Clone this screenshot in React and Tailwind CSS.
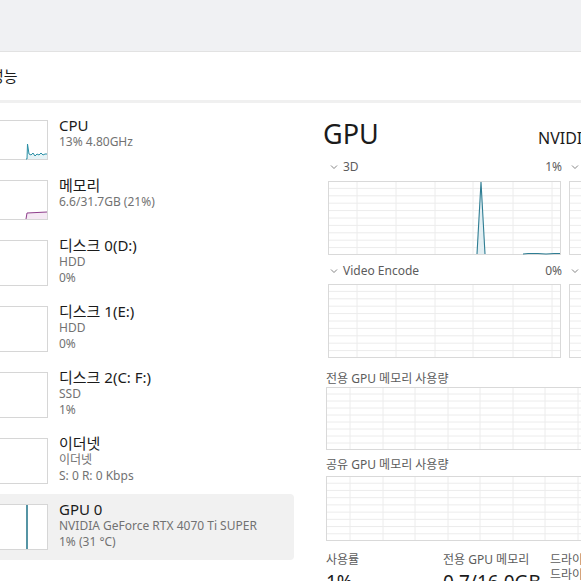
import React from 'react';

const FONT = '"Noto Sans", "Noto Sans CJK KR", sans-serif';

const ROWS = [
  { title: 'CPU', lines: ['13% 4.80GHz'], thumb: 'cpu' },
  { title: '메모리', lines: ['6.6/31.7GB (21%)'], thumb: 'mem' },
  { title: '디스크 0(D:)', lines: ['HDD', '0%'] },
  { title: '디스크 1(E:)', lines: ['HDD', '0%'] },
  { title: '디스크 2(C: F:)', lines: ['SSD', '1%'] },
  { title: '이더넷', lines: ['이더넷', 'S: 0 R: 0 Kbps'] },
  { title: 'GPU 0', lines: ['NVIDIA GeForce RTX 4070 Ti SUPER', '1% (31 °C)'], thumb: 'gpu', active: true },
];

function Thumb({ kind, h }) {
  return (
    <svg width="48" height={h} className="shrink-0 block">
      <rect x="-2" y="0.5" width="49.5" height={h - 1} fill="white" stroke="#d6d6d6" />
      {kind === 'cpu' && (
        <>
          <path d="M26 39 L27 39 L27.5 24 L29 34 L31 35 L33 33 L35 36 L37 34 L39 35 L41 33 L43 35 L45 34 L47 34 L47 39 Z" fill="#e6f3f6" />
          <path d="M26 39 L27 39 L27.5 24 L29 34 L31 35 L33 33 L35 36 L37 34 L39 35 L41 33 L43 35 L45 34 L47 34" fill="none" stroke="#2a8fa5" strokeWidth="1" />
        </>
      )}
      {kind === 'mem' && (
        <>
          <path d="M26 39 L27 33 L47 32 L47 39 Z" fill="#f5e9f4" />
          <path d="M26 39 L27 33 L47 32" fill="none" stroke="#8e3d8b" strokeWidth="1" />
        </>
      )}
      {kind === 'gpu' && <line x1="27" y1="1" x2="27" y2={h - 1} stroke="#2b7a8e" strokeWidth="1.6" />}
    </svg>
  );
}

function Graph({ w, h, vx, rows, children }) {
  const hs = [];
  for (let i = 1; i < rows; i++) hs.push((h / rows) * i);
  return (
    <svg width={w} height={h} className="block shrink-0">
      <rect x="0.5" y="0.5" width={w - 1} height={h - 1} fill="white" stroke="#d9d9d9" />
      {hs.map((y) => (
        <line key={'h' + y} x1="1" x2={w - 1} y1={y} y2={y} stroke="#ececec" />
      ))}
      {vx.map((x) => (
        <line key={'v' + x} x1={x} x2={x} y1="1" y2={h - 1} stroke="#ececec" />
      ))}
      {children}
    </svg>
  );
}

function Chevron() {
  return (
    <svg width="8" height="6" viewBox="0 0 8 6" className="shrink-0">
      <polyline points="1,1.5 4,4.5 7,1.5" fill="none" stroke="#777" strokeWidth="0.9" />
    </svg>
  );
}

function Label({ name, value }) {
  return (
    <div className="flex items-center h-[16px] text-[12px] text-[#5c5c5c]">
      <span className="ml-[2px]"><Chevron /></span>
      <span className="ml-[5px]">{name}</span>
      {value && <span className="ml-auto mr-[-1px]">{value}</span>}
    </div>
  );
}

const V3D = [29, 68, 107, 145, 185, 224];
const VMEM = [24, 57, 89, 122, 154, 187, 219, 252];

export default function App() {
  return (
    <div className="w-[581px] h-[581px] overflow-hidden bg-white text-[#1b1b1b]" style={{ fontFamily: FONT }}>
      <div className="h-[52px] bg-[#f0f1f3] border-b border-[#e2e2e2]" />
      <div className="h-[48px] flex items-center">
        <span className="ml-[-10px] text-[15px]">성능</span>
      </div>
      <div className="h-[3px] bg-[#f0f0f0]" />

      <div className="flex">
        {/* 왼쪽 목록 */}
        <aside className="w-[294px] shrink-0 pt-[7px]">
          {ROWS.map((r) => {
            const h = r.lines.length === 1 ? 40 : 46;
            return (
              <div
                key={r.title}
                className={`flex py-[10px] rounded-r-[4px] ${r.active ? 'bg-[#f1f1f1]' : ''}`}
              >
                <Thumb kind={r.thumb} h={h} />
                <div className="ml-[11px] mt-[-4px] min-w-0">
                  <p className="text-[15px] leading-[18px] whitespace-nowrap">{r.title}</p>
                  {r.lines.map((l, i) => (
                    <p key={i} className="text-[12px] leading-[16px] text-[#727272] whitespace-nowrap">{l}</p>
                  ))}
                </div>
              </div>
            );
          })}
        </aside>

        {/* 오른쪽 상세 */}
        <main className="flex-1 min-w-0 pl-[32px]">
          <div className="flex items-baseline mt-[15px] h-[32px] whitespace-nowrap">
            <span className="w-[215px] shrink-0 ml-[-3px] text-[27px] leading-[32px]">GPU</span>
            <span className="text-[16px]">NVIDIA GeForce RTX 4070 Ti SUPER</span>
          </div>

          <div className="flex gap-[8px] ml-[2px] mt-[9px]">
            <div className="w-[233px] shrink-0">
              <Label name="3D" value="1%" />
              <div className="mt-[6px]">
                <Graph w={233} h={74} vx={V3D} rows={10}>
                  <path d="M149 73 L153 1 L157 73 Z" fill="#e3eff3" />
                  <path d="M149 73 L153 1 L157 73" fill="none" stroke="#2e7d93" strokeWidth="1.1" />
                  <path d="M195 73 L200 72.5 L210 72.5 L218 73 L226 72.5 L232 72.5" fill="none" stroke="#2e7d93" strokeWidth="1" />
                </Graph>
              </div>
              <div className="mt-[8px]">
                <Label name="Video Encode" value="0%" />
              </div>
              <div className="mt-[5px]">
                <Graph w={233} h={74} vx={V3D} rows={10} />
              </div>
            </div>
            <div className="w-[233px] shrink-0">
              <Label name="Copy" value="0%" />
              <div className="mt-[6px]">
                <Graph w={233} h={74} vx={V3D} rows={10} />
              </div>
              <div className="mt-[8px]">
                <Label name="Video Decode" value="0%" />
              </div>
              <div className="mt-[5px]">
                <Graph w={233} h={74} vx={V3D} rows={10} />
              </div>
            </div>
          </div>

          <p className="mt-[13px] h-[16px] leading-[16px] text-[12px] text-[#5c5c5c] whitespace-nowrap">전용 GPU 메모리 사용량</p>
          <Graph w={300} h={63} vx={VMEM} rows={9} />

          <p className="mt-[7px] h-[16px] leading-[16px] text-[12px] text-[#5c5c5c] whitespace-nowrap">공유 GPU 메모리 사용량</p>
          <div className="mt-[3px]">
            <Graph w={300} h={65} vx={VMEM} rows={9} />
          </div>

          <div className="flex mt-[11px] whitespace-nowrap">
            <div className="w-[117px] shrink-0">
              <p className="text-[12px] leading-[16px] text-[#5c5c5c]">사용률</p>
              <p className="text-[19px] leading-[26px] mt-[1px]">1%</p>
            </div>
            <div className="w-[107px] shrink-0">
              <p className="text-[12px] leading-[16px] text-[#5c5c5c]">전용 GPU 메모리</p>
              <p className="text-[19px] leading-[26px] mt-[1px]">0.7/16.0GB</p>
            </div>
            <div className="text-[12px] leading-[15px] text-[#5c5c5c]">
              <p>드라이버 버전:</p>
              <p>드라이버 날짜:</p>
            </div>
          </div>
        </main>
      </div>
    </div>
  );
}
